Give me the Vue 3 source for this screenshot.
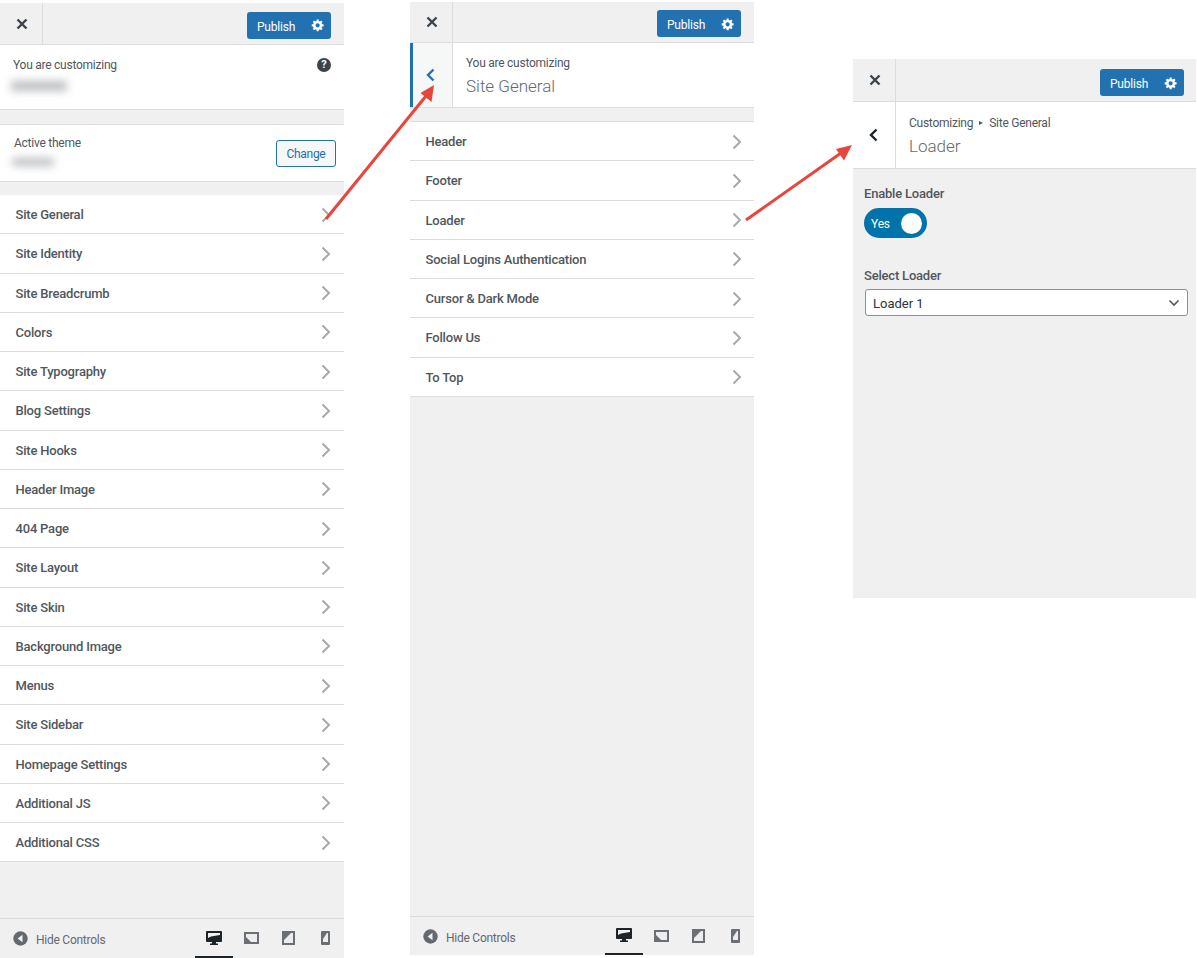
<script setup>
const mainRows = ['Site General','Site Identity','Site Breadcrumb','Colors','Site Typography','Blog Settings','Site Hooks','Header Image','404 Page','Site Layout','Site Skin','Background Image','Menus','Site Sidebar','Homepage Settings','Additional JS','Additional CSS']
const subRows = ['Header','Footer','Loader','Social Logins Authentication','Cursor & Dark Mode','Follow Us','To Top']
const gear = 'M18 12h-2.18c-.17.7-.44 1.35-.81 1.93l1.54 1.54-2.1 2.1-1.54-1.54c-.58.36-1.23.63-1.91.79V19H8v-2.18c-.68-.16-1.33-.43-1.91-.79l-1.54 1.54-2.12-2.12 1.54-1.54c-.36-.58-.63-1.23-.79-1.91H1V9.03h2.17c.16-.7.44-1.35.8-1.94L2.43 5.55l2.1-2.1 1.54 1.54c.58-.37 1.24-.64 1.93-.81V2h3v2.18c.68.16 1.33.43 1.91.79l1.54-1.54 2.12 2.12-1.54 1.54c.36.59.64 1.24.8 1.94H18V12zm-8.5 1.5c1.66 0 3-1.34 3-3s-1.34-3-3-3-3 1.34-3 3 1.34 3 3 3z'
</script>

<template>
  <div class="canvas">
    <section class="panel panel-main">
      <header class="topbar">
        <div class="close"><svg width="12" height="12" viewBox="0 0 12 12"><path d="M1.5 1.5l9 9M10.5 1.5l-9 9" /></svg></div>
        <button class="publish"><span>Publish</span><svg width="14" height="14" viewBox="0 0 20 20"><path :d="gear" fill-rule="evenodd" /></svg></button>
      </header>
      <div class="info info-main">
        <div class="info-row">
          <span class="small">You are customizing</span>
          <span class="help">?</span>
        </div>
        <div class="blur blur-site"></div>
      </div>
      <div class="theme">
        <div class="theme-text">
          <span class="small">Active theme</span>
          <div class="blur blur-theme"></div>
        </div>
        <button class="change"><span>Change</span></button>
      </div>
      <ul class="rows">
        <li v-for="r in mainRows" :key="r" class="row">
          <span>{{ r }}</span>
          <svg class="chev" width="10" height="16" viewBox="0 0 10 16"><path d="M1.5 1.5L8 8l-6.5 6.5" /></svg>
        </li>
      </ul>
      <footer class="bottombar">
        <span class="hide"><svg width="15" height="15" viewBox="0 0 15 15"><circle cx="7.5" cy="7.5" r="7.2" /><path d="M9.5 3.8v7.4L4.6 7.5z" fill="#f0f0f1" /></svg><span class="hide-text">Hide Controls</span></span>
        <div class="devices">
          <span class="dev active"><svg width="16" height="15" viewBox="0 0 16 15"><path d="M1 0h14a1 1 0 0 1 1 1v9a1 1 0 0 1-1 1H10v1.5h2V14H4v-1.5h2V11H1a1 1 0 0 1-1-1V1a1 1 0 0 1 1-1z" /><path class="cut" d="M2 2h12v2L5 5.500 2 7z" /></svg></span>
          <span class="dev"><svg width="15" height="12" viewBox="0 0 15 12"><path class="bg" d="M0 0h15v12H0z" /><path d="M0 0h15v12H0zM2 2v8h11V2z" fill-rule="evenodd" /><path d="M2 5l5 5H2z" /></svg></span>
          <span class="dev"><svg width="13" height="14" viewBox="0 0 13 14"><path class="bg" d="M0 0h13v14H0z" /><path d="M0 0h13v14H0zM2 2v10h9V2z" fill-rule="evenodd" /><path d="M2 2h7l-7 7z" /></svg></span>
          <span class="dev"><svg width="9" height="14" viewBox="0 0 9 14"><path class="bg" d="M1 0h7v14H1z" /><path d="M1 0h7a1 1 0 0 1 1 1v12a1 1 0 0 1-1 1H1a1 1 0 0 1-1-1V1a1 1 0 0 1 1-1zM2 2v9h5V2z" fill-rule="evenodd" /><path d="M2 2h4L2 8z" /></svg></span>
        </div>
      </footer>
    </section>

    <section class="panel panel-sub">
      <header class="topbar">
        <div class="close"><svg width="12" height="12" viewBox="0 0 12 12"><path d="M1.5 1.5l9 9M10.5 1.5l-9 9" /></svg></div>
        <button class="publish"><span>Publish</span><svg width="14" height="14" viewBox="0 0 20 20"><path :d="gear" fill-rule="evenodd" /></svg></button>
      </header>
      <div class="info-back">
        <div class="back back-blue"><svg width="9" height="14" viewBox="0 0 9 14"><path d="M7.5 1.5L2 7l5.500 5.500" /></svg></div>
        <div class="title">
          <span class="small">You are customizing</span>
          <span class="big">Site General</span>
        </div>
      </div>
      <ul class="rows rows-sub">
        <li v-for="r in subRows" :key="r" class="row">
          <span>{{ r }}</span>
          <svg class="chev" width="10" height="16" viewBox="0 0 10 16"><path d="M1.5 1.5L8 8l-6.500 6.500" /></svg>
        </li>
      </ul>
      <footer class="bottombar bottombar-sub">
        <span class="hide"><svg width="15" height="15" viewBox="0 0 15 15"><circle cx="7.5" cy="7.5" r="7.2" /><path d="M9.5 3.8v7.4L4.6 7.5z" fill="#f0f0f1" /></svg><span class="hide-text">Hide Controls</span></span>
        <div class="devices">
          <span class="dev active"><svg width="16" height="15" viewBox="0 0 16 15"><path d="M1 0h14a1 1 0 0 1 1 1v9a1 1 0 0 1-1 1H10v1.500h2V14H4v-1.500h2V11H1a1 1 0 0 1-1-1V1a1 1 0 0 1 1-1z" /><path class="cut" d="M2 2h12v2L5 5.500 2 7z" /></svg></span>
          <span class="dev"><svg width="15" height="12" viewBox="0 0 15 12"><path class="bg" d="M0 0h15v12H0z" /><path d="M0 0h15v12H0zM2 2v8h11V2z" fill-rule="evenodd" /><path d="M2 5l5 5H2z" /></svg></span>
          <span class="dev"><svg width="13" height="14" viewBox="0 0 13 14"><path class="bg" d="M0 0h13v14H0z" /><path d="M0 0h13v14H0zM2 2v10h9V2z" fill-rule="evenodd" /><path d="M2 2h7l-7 7z" /></svg></span>
          <span class="dev"><svg width="9" height="14" viewBox="0 0 9 14"><path class="bg" d="M1 0h7v14H1z" /><path d="M1 0h7a1 1 0 0 1 1 1v12a1 1 0 0 1-1 1H1a1 1 0 0 1-1-1V1a1 1 0 0 1 1-1zM2 2v9h5V2z" fill-rule="evenodd" /><path d="M2 2h4L2 8z" /></svg></span>
        </div>
      </footer>
    </section>

    <section class="panel panel-loader">
      <header class="topbar">
        <div class="close"><svg width="12" height="12" viewBox="0 0 12 12"><path d="M1.500 1.500l9 9M10.500 1.500l-9 9" /></svg></div>
        <button class="publish"><span>Publish</span><svg width="14" height="14" viewBox="0 0 20 20"><path :d="gear" fill-rule="evenodd" /></svg></button>
      </header>
      <div class="info-back info-loader">
        <div class="back"><svg width="9" height="14" viewBox="0 0 9 14"><path d="M7.500 1.500L2 7l5.500 5.500" /></svg></div>
        <div class="title">
          <span class="small crumb">Customizing<i class="tri"></i>Site General</span>
          <span class="big">Loader</span>
        </div>
      </div>
      <div class="controls">
        <label class="label">Enable Loader</label>
        <div class="toggle"><span>Yes</span><i class="knob"></i></div>
        <label class="label label-select">Select Loader</label>
        <div class="select">
          <span>Loader 1</span>
          <svg width="12" height="8" viewBox="0 0 12 8"><path d="M1.500 1.500L6 6l4.500-4.500" /></svg>
        </div>
      </div>
    </section>

    <svg class="arrows" width="1197" height="958" viewBox="0 0 1197 958">
      <path d="M326 219L426 96" />
      <path class="head" d="M434 85l-2.500 17-11-9z" />
      <path d="M746 220L841 153" />
      <path class="head" d="M852 145l-8 15.500-8-11.500z" />
    </svg>
  </div>
</template>

<style>
html, body { background: #fff; }
</style>

<style scoped>
.canvas {
  position: relative;
  display: flex;
  align-items: flex-start;
  width: 1197px;
  height: 958px;
  overflow: hidden;
  font-family: Roboto, "Open Sans", sans-serif;
  color: #50575e;
  background: #fff;
}
.panel { display: flex; flex-direction: column; width: 344px; background: #f0f0f1; flex: none; }
.panel-main { margin-top: 3px; height: 955px; }
.panel-sub { margin: 2px 0 0 66px; height: 953px; }
.panel-loader { margin: 59px 0 0 99px; width: 343px; height: 539px; }

.topbar {
  display: flex; align-items: center; justify-content: space-between;
  height: 42px; box-sizing: border-box; border-bottom: 1px solid #dcdcde; padding-right: 13px; flex: none;
}
.panel-sub .topbar { height: 41px; }
.panel-loader .topbar { height: 43px; padding-right: 12px; }
.close {
  width: 43px; align-self: stretch; box-sizing: border-box; border-right: 1px solid #dcdcde; padding-left: 1px;
  display: flex; align-items: center; justify-content: center; color: #3c434a;
}
.close svg path { stroke: #3c434a; stroke-width: 2.4; fill: none; }
.publish {
  display: flex; align-items: center; justify-content: space-between;
  width: 84px; height: 27px; margin-top: 3px; padding: 0 6px 0 10px; box-sizing: border-box;
  background: #2271b1; border: 0; border-radius: 3px; color: #fff;
  font: 12px Roboto, sans-serif; letter-spacing: -0.2px;
}
.publish span { padding-top: 3px; }
.panel-loader .publish { margin-top: 5px; }
.publish svg path { fill: #fff; }

.info { background: #fff; box-sizing: border-box; border-bottom: 1px solid #dcdcde; }
.info-main { height: 65px; padding: 12px 13px 0 13px; }
.info-row { display: flex; align-items: center; justify-content: space-between; }
.small { font-size: 12px; line-height: 16px; letter-spacing: -0.25px; color: #50575e; }
.help {
  width: 14px; height: 14px; border-radius: 50%; background: #3c434a; color: #fff;
  font-size: 11px; font-weight: 700; line-height: 14px; text-align: center;
}
.blur { background: #bcbec0; filter: blur(4px); border-radius: 3px; }
.blur-site { width: 56px; height: 10px; margin: 8px 0 0 -2px; }
.blur-theme { width: 42px; height: 8px; margin: 7px 0 0 -2px; }

.theme {
  display: flex; align-items: center; justify-content: space-between; flex: none;
  height: 58px; box-sizing: border-box; margin-top: 14px; padding: 0 8px 0 14px;
  background: #fff; border-top: 1px solid #dcdcde; border-bottom: 1px solid #dcdcde;
}
.theme-text { margin-top: -8px; }
.change {
  width: 60px; height: 27px; padding: 0; box-sizing: border-box;
  background: #f6f7f7; border: 1px solid #2271b1; border-radius: 3px; color: #2271b1;
  font: 12px Roboto, sans-serif; letter-spacing: -0.3px;
}
.change span { display: block; padding-top: 2px; }

.rows { list-style: none; margin: 13px 0 0; padding: 0; flex: none; }
.rows-sub { margin-top: 13px; border-top: 1px solid #dcdcde; }
.row {
  display: flex; align-items: center; justify-content: space-between;
  height: 39.25px; box-sizing: border-box; padding: 1px 13px 0 15.5px;
  background: #fff; border-bottom: 1px solid #dcdcde;
  font-size: 13px; font-weight: 500; letter-spacing: -0.2px; color: #50575e;
}
.panel-sub .row { padding-right: 12px; }
.chev path { stroke: #a7aaad; stroke-width: 2; fill: none; }

.bottombar {
  margin-top: auto; display: flex; align-items: center; justify-content: space-between;
  height: 40px; box-sizing: border-box; border-top: 1px solid #dcdcde; padding-left: 13px; flex: none;
}
.bottombar-sub { height: 39px; }
.hide { display: flex; align-items: center; gap: 8px; font-size: 12px; letter-spacing: -0.25px; color: #646970; }
.hide-text { padding-top: 2px; }
.bottombar-sub .hide-text { padding-top: 4px; }
.hide svg circle { fill: #646970; }
.devices { display: flex; align-self: stretch; }
.dev {
  width: 37px; display: flex; align-items: center; justify-content: center;
  border-bottom: 2px solid transparent; box-sizing: border-box; padding-top: 1px;
}
.dev svg path { fill: #6b6f74; }
.dev svg path.bg { fill: #ecedee; }
.dev.active { width: 38px; border-bottom-color: #1d2327; }
.dev.active svg path { fill: #1d2327; }
.dev.active svg path.cut { fill: #f0f0f1; }

.info-back { display: flex; height: 65px; box-sizing: border-box; background: #fff; border-bottom: 1px solid #dcdcde; flex: none; }
.back {
  width: 43px; display: flex; align-items: center; justify-content: center;
  background: #f6f7f7; border-right: 1px solid #dcdcde; flex: none; box-sizing: border-box; padding-right: 2px;
}
.back svg path { stroke: #1d2327; stroke-width: 2.4; fill: none; }
.back-blue { border-left: 3px solid #2271b1; padding-right: 4px; }
.back-blue svg path { stroke: #2271b1; }
.info-loader { height: 67px; }
.info-loader .back { background: #fff; }
.title { display: flex; flex-direction: column; padding: 12px 0 0 13px; }
.info-loader .title { padding-top: 13px; }
.big { font-size: 17px; font-weight: 300; color: #646970; line-height: 24px; margin-top: 3px; }
.crumb { display: flex; align-items: center; }
.tri {
  width: 0; height: 0; margin: 0 6px;
  border-left: 4px solid #50575e; border-top: 2.500px solid transparent; border-bottom: 2.500px solid transparent;
}

.controls { display: flex; flex-direction: column; align-items: flex-start; padding: 16px 8px 0 11px; }
.label { font-size: 13px; font-weight: 500; letter-spacing: -0.2px; line-height: 17px; }
.toggle {
  display: flex; align-items: center; justify-content: space-between;
  width: 63px; height: 30px; margin-top: 6px; padding: 0 5px 0 7px; box-sizing: border-box;
  background: #0073aa; border-radius: 15px; color: #fff; font-size: 12px; letter-spacing: -0.2px;
}
.toggle span { padding-top: 2px; }
.knob { width: 21px; height: 21px; border-radius: 50%; background: #fff; }
.label-select { margin-top: 29px; }
.select {
  display: flex; align-items: center; justify-content: space-between; align-self: stretch;
  height: 27px; margin: 5px 0 0 1px; padding: 0 7px; box-sizing: border-box;
  background: #fff; border: 1px solid #8c8f94; border-radius: 3px; font-size: 13px; color: #2c3338;
}
.select span { padding-top: 1px; }
.select svg path { stroke: #50575e; stroke-width: 1.6; fill: none; }

.arrows { position: absolute; left: 0; top: 0; pointer-events: none; }
.arrows path { stroke: #e8453c; stroke-width: 3; fill: none; }
.arrows path.head { fill: #e8453c; stroke: none; }
</style>
